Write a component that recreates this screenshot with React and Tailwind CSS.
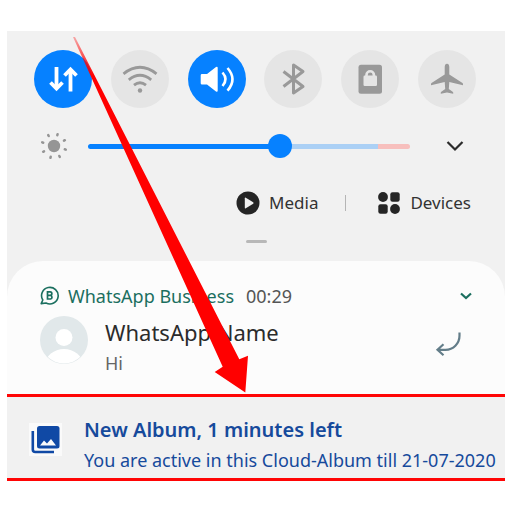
import React from "react";

const toggles = [
  {
    label: "Mobile data",
    on: true,
    icon: (
      <g fill="none" stroke="#fff" strokeWidth="3.8">
        <path d="M22.500 17v21" />
        <path d="M16.500 32.500l6 6 6-6" />
        <path d="M36.500 41.500v-21" />
        <path d="M30.500 25.500l6-6 6 6" />
      </g>
    ),
  },
  {
    label: "Wi-Fi",
    on: false,
    icon: (
      <g fill="none" stroke="#999" strokeWidth="2.8">
        <path d="M12.500 23.800q16.500-13 33 0" />
        <path d="M17.800 29.800q11.200-9 22.400 0" />
        <path d="M23 35.200q6-4.800 12 0" />
        <circle cx="29" cy="40.500" r="2.200" fill="#999" stroke="none" />
      </g>
    ),
  },
  {
    label: "Sound",
    on: true,
    icon: (
      <g>
        <path d="M14 24h5l9-7q1.700-1 1.700 1v22.500q0 2-1.700 1l-9-7h-5q-1.300 0-1.300-1.300v-7.900q0-1.300 1.300-1.300z" fill="#fff" />
        <path d="M34.500 22.500q6 6.700 0 13.500M39.500 18q10 11.300 0 22.600" fill="none" stroke="#fff" strokeWidth="2.600" />
      </g>
    ),
  },
  {
    label: "Bluetooth",
    on: false,
    icon: (
      <path
        d="M19.500 21.500L39 36.500l-9.500 6.500V15l9.500 6.500-19.500 15"
        fill="none"
        stroke="#999"
        strokeWidth="3"
        strokeLinejoin="round"
      />
    ),
  },
  {
    label: "Screen lock",
    on: false,
    icon: (
      <g>
        <rect x="17.500" y="14.700" width="23.500" height="29" rx="2.500" fill="#999" />
        <rect x="22.500" y="25.500" width="13.500" height="10.500" rx="1.200" fill="#e5e5e5" />
        <path d="M25.500 26.500v-1.500a3.700 3.700 0 0 1 7.400 0v1.500" fill="none" stroke="#e5e5e5" strokeWidth="2.600" />
      </g>
    ),
  },
  {
    label: "Flight mode",
    on: false,
    icon: (
      <path
        d="M29 13.800c1.700 0 2.300 1.700 2.300 3.500v7.200l13.200 8.500q.7.500.5 2.300l-13.700-3.300-.5 7 4.200 3q.4.500.2 1.800l-6.200-1.300-6.200 1.300q-.2-1.300.2-1.800l4.200-3-.5-7-13.700 3.300q-.2-1.800.5-2.300l13.200-8.500v-7.200c0-1.800.6-3.500 2.300-3.500z"
        fill="#999"
      />
    ),
  },
];

const rays = [17, 62, 107, 152, 197, 242, 287, 332];

function SunIcon() {
  return (
    <svg viewBox="0 0 28 28" className="h-7 w-7 shrink-0" aria-hidden="true">
      <circle cx="14" cy="14" r="6.200" fill="#959595" />
      {rays.map((a) => (
        <path key={a} d="M14 1.700v1" transform={`rotate(${a} 14 14)`} stroke="#959595" strokeWidth="2.500" strokeLinecap="round" />
      ))}
    </svg>
  );
}

function QuickSettings() {
  return (
    <section className="pt-[19px]">
      <div className="flex justify-between pr-[29px] pl-[27px]">
        {toggles.map((t) => (
          <button
            key={t.label}
            aria-label={t.label}
            aria-pressed={t.on}
            className={t.on ? "size-[58px] rounded-full bg-[#0681ff]" : "size-[58px] rounded-full bg-[#e5e5e5]"}
          >
            <svg viewBox="0 0 58 58" className="size-full" aria-hidden="true">
              {t.icon}
            </svg>
          </button>
        ))}
      </div>

      <div className="mt-6 flex items-center pr-[41px] pl-[33px]">
        <SunIcon />
        <input
          type="range"
          min="0"
          max="1000"
          defaultValue="604"
          aria-label="Brightness"
          className="mr-9 ml-5 h-[5px] min-w-0 flex-1 appearance-none rounded-full bg-[linear-gradient(to_right,#0681ff_60%,#abd0f5_60%,#abd0f5_90%,#f7bfbd_90%)] [&::-webkit-slider-thumb]:size-6 [&::-webkit-slider-thumb]:appearance-none [&::-webkit-slider-thumb]:rounded-full [&::-webkit-slider-thumb]:bg-[#0681ff]"
        />
        <button aria-label="More brightness options" className="shrink-0">
          <svg viewBox="0 0 18 12" className="h-3 w-[18px]" aria-hidden="true">
            <path d="M1.500 2l7.500 7.500 7.500-7.500" fill="none" stroke="#2b2b2b" strokeWidth="2.200" />
          </svg>
        </button>
      </div>

      <div className="mt-7 flex h-[30px] items-center justify-end pr-[34px] text-[17px] leading-6 text-[#333]">
        <button className="flex items-center gap-[9px]">
          <svg viewBox="0 0 24 24" className="size-6" aria-hidden="true">
            <circle cx="12" cy="12" r="11.500" fill="#252525" />
            <path d="M8.800 7.200v9.600q0 1 1 .5l7.400-4.600q.8-.7 0-1.400L9.800 6.700q-1-.5-1 .5z" fill="#f1f1f1" />
          </svg>
          Media
        </button>
        <span className="mr-8 ml-[27px] h-4 w-px bg-[#b5b5b5]" />
        <button className="flex items-center gap-[10px]">
          <svg viewBox="0 0 22 22" className="size-[22px]" fill="#252525" aria-hidden="true">
            <circle cx="5" cy="5" r="4.900" />
            <rect x="12.300" y=".3" width="9.400" height="9.400" rx="2.200" />
            <rect x=".3" y="12.300" width="9.400" height="9.400" rx="2.200" />
            <circle cx="17" cy="17" r="4.900" />
          </svg>
          Devices
        </button>
      </div>
      <div className="mx-auto mt-[22px] mb-[18px] h-[3px] w-[21px] rounded-sm bg-[#b8b8b8]" />
    </section>
  );
}

function MessageCard() {
  return (
    <article className="h-[133px] rounded-t-[36px] bg-[#fcfcfc] pr-8 pl-[33px]">
      <header className="flex items-center pt-[22px] text-[18px] leading-[26px] text-[#1b6f5f]">
        <svg viewBox="0 0 20 20" className="mr-2 size-5 shrink-0" aria-hidden="true">
          <path d="M2.800 14A8.300 8.300 0 1 1 6 17L1.200 17.600z" fill="none" stroke="#1b6f5f" strokeWidth="1.600" strokeLinejoin="round" />
          <path d="M7.500 5.800h2.600a1.700 1.700 0 0 1 0 3.500H7.500zM7.500 9.300h3a1.900 1.900 0 0 1 0 3.700h-3z" fill="none" stroke="#1b6f5f" strokeWidth="1.700" />
        </svg>
        <span>WhatsApp Business</span>
        <time className="ml-3 text-[#555]">00:29</time>
        <button aria-label="Expand notification" className="mr-px ml-auto">
          <svg viewBox="0 0 12 8" className="h-2 w-3" aria-hidden="true">
            <path d="M1 1.500l5 4.500 5-4.500" fill="none" stroke="#1b6f5f" strokeWidth="2.200" />
          </svg>
        </button>
      </header>
      <div className="flex items-start">
        <svg viewBox="0 0 48 48" className="mt-[7px] size-12 shrink-0" aria-hidden="true">
          <clipPath id="avatar">
            <circle cx="24" cy="24" r="23.500" />
          </clipPath>
          <circle cx="24" cy="24" r="24" fill="#e1e8ea" />
          <g clipPath="url(#avatar)" fill="#fff">
            <circle cx="24" cy="21.500" r="8.500" />
            <ellipse cx="24" cy="48" rx="18.500" ry="15" />
          </g>
        </svg>
        <div className="ml-[17px]">
          <h2 className="mt-[7px] text-[22px] leading-8 text-[#2b2b2b]">WhatsApp Name</h2>
          <p className="mt-0.5 text-[18px] leading-[26px] text-[#666]">Hi</p>
        </div>
        <button aria-label="Reply" className="mt-[23px] mr-3 ml-auto">
          <svg viewBox="0 0 26 26" className="size-[26px]" aria-hidden="true">
            <path d="M24.500 .5v3.300a14 14 0 0 1-14 14H2M8.500 12.300L2.500 17.800 8.500 23.300" fill="none" stroke="#637d89" strokeWidth="2.200" />
          </svg>
        </button>
      </div>
    </article>
  );
}

function AlbumNotification() {
  return (
    <article className="flex h-[87px] items-start border-y-[3px] border-[#ff0505] bg-[#f1f1f1] pl-[22px] text-[#164a9c]">
      <svg viewBox="0 0 33 33" className="mt-[26px] size-[33px] shrink-0 bg-[#fafafa]" aria-hidden="true">
        <rect x="8" y="3" width="22.500" height="22.500" rx="2.500" fill="#1049a5" />
        <path d="M11 22.500l4-5 3 3 4-4.500 5 6.500z" fill="#fafafa" />
        <path d="M3.800 8v18.500q0 2.500 2.500 2.500H25" fill="none" stroke="#1049a5" strokeWidth="2.600" />
      </svg>
      <div className="ml-[22px] whitespace-nowrap">
        <h2 className="mt-[17px] text-[20px] leading-8 font-semibold">New Album, 1 minutes left</h2>
        <p className="mt-px text-[18px] leading-[26px]">You are active in this Cloud-Album till 21-07-2020</p>
      </div>
    </article>
  );
}

export default function App() {
  return (
    <div className="min-h-screen overflow-hidden bg-white pt-[31px] font-['Noto_Sans',sans-serif]">
      <main className="relative mx-[7px] bg-[#f1f1f1]">
        <QuickSettings />
        <MessageCard />
        <AlbumNotification />
        <svg viewBox="0 0 250 370" className="pointer-events-none absolute top-0 left-0 h-[370px] w-[250px]" aria-hidden="true">
          <linearGradient id="fade" x1="66" y1="6" x2="85" y2="45" gradientUnits="userSpaceOnUse">
            <stop offset="0" stopColor="#f00" stopOpacity="0.3" />
            <stop offset="1" stopColor="#f00" />
          </linearGradient>
          <path d="M66 6h2L232.300 328.300 241 324.700 238.300 361.500 207.700 341 215.700 335.700z" fill="url(#fade)" />
        </svg>
      </main>
    </div>
  );
}
